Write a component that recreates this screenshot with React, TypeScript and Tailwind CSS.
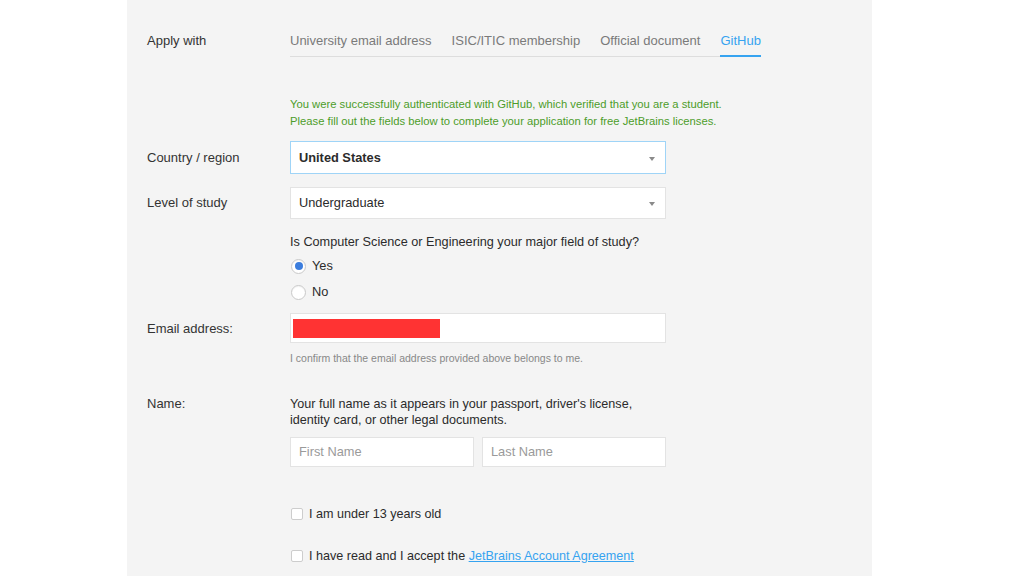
import React from 'react';

const tabs = ['University email address', 'ISIC/ITIC membership', 'Official document', 'GitHub'];

function SelectBox({ value, focused, bold }: { value: string; focused?: boolean; bold?: boolean }) {
  return (
    <div
      className={`flex items-center justify-between w-[376px] bg-white pl-[8px] pr-[10px] border ${
        focused ? 'h-[33px] border-[#9fd4f7]' : 'h-[32px] border-[#e3e3e3]'
      }`}
    >
      <span className={`text-[12.8px] text-[#2b2b2b] ${bold ? 'font-bold' : ''}`}>{value}</span>
      <svg width="6" height="4" viewBox="0 0 6 4" className="mt-[2px]">
        <path d="M0 0 L6 0 L3 4 Z" fill="#8a8a8a" />
      </svg>
    </div>
  );
}

function Radio({ label, checked }: { label: string; checked?: boolean }) {
  return (
    <div className="flex items-center h-[20px]">
      <span className="ml-px flex items-center justify-center w-[15px] h-[15px] rounded-full bg-white border border-[#c9c9c9] shadow-[inset_0_1px_1px_rgba(0,0,0,0.05)]">
        {checked && <span className="w-[8px] h-[8px] rounded-full bg-[#3b7ddd]" />}
      </span>
      <span className="ml-[6px] text-[12.8px] text-[#2b2b2b]">{label}</span>
    </div>
  );
}

function Checkbox({ children }: { children: React.ReactNode }) {
  return (
    <div className="flex items-center h-[18px]">
      <span className="ml-px w-[12px] h-[12px] rounded-[2px] bg-white border border-[#cdcdcd]" />
      <span className="ml-[6px] text-[12.6px] text-[#2b2b2b]">{children}</span>
    </div>
  );
}

export default function App() {
  return (
    <div className="flex w-full h-[576px] bg-white overflow-hidden font-['Liberation_Sans',Arial,sans-serif]">
      <div className="ml-[127px] w-[745px] h-full bg-[#f4f4f4] pl-[20px] pt-[33px]">
        {/* Apply with */}
        <div className="flex">
          <div className="w-[143px] text-[13px] leading-[16px] text-[#333]">Apply with</div>
          <div className="flex gap-[20px] border-b border-[#dddddd] w-fit">
            {tabs.map((t) => (
              <div
                key={t}
                className={`text-[13px] leading-[16px] pb-[6px] -mb-px border-b-2 ${
                  t === 'GitHub' ? 'text-[#36a3f0] border-[#36a3f0]' : 'text-[#7a7a7a] border-transparent'
                }`}
              >
                {t}
              </div>
            ))}
          </div>
        </div>

        {/* Success message */}
        <div className="ml-[143px] mt-[39px] text-[11.25px] leading-[17px] text-[#4c9d2a]">
          <p>You were successfully authenticated with GitHub, which verified that you are a student.</p>
          <p>Please fill out the fields below to complete your application for free JetBrains licenses.</p>
        </div>

        {/* Country */}
        <div className="flex items-center mt-[11px]">
          <div className="w-[143px] text-[13px] text-[#333]">Country / region</div>
          <SelectBox value="United States" focused bold />
        </div>

        {/* Level */}
        <div className="flex items-center mt-[13px]">
          <div className="w-[143px] text-[13px] text-[#333]">Level of study</div>
          <SelectBox value="Undergraduate" />
        </div>

        {/* Major */}
        <div className="ml-[143px]">
          <p className="mt-[15px] text-[12.7px] leading-[16px] text-[#2b2b2b]">
            Is Computer Science or Engineering your major field of study?
          </p>
          <div className="mt-[6px]">
            <Radio label="Yes" checked />
          </div>
          <div className="mt-[6px]">
            <Radio label="No" />
          </div>
        </div>

        {/* Email */}
        <div className="flex items-center mt-[11px]">
          <div className="w-[143px] text-[13px] text-[#333] pt-[2px]">Email address:</div>
          <div className="w-[376px] h-[30px] bg-white border border-[#e3e3e3] pl-[2px] pt-[5px]">
            <div className="w-[147px] h-[19px] bg-[#ff3333]" />
          </div>
        </div>
        <p className="ml-[143px] mt-[8px] text-[10.5px] leading-[14px] text-[#888]">
          I confirm that the email address provided above belongs to me.
        </p>

        {/* Name */}
        <div className="flex mt-[31px]">
          <div className="w-[143px] text-[13px] leading-[16px] text-[#333]">Name:</div>
          <div className="w-[376px]">
            <p className="text-[12.6px] leading-[16px] text-[#2b2b2b]">
              Your full name as it appears in your passport, driver's license,
              <br />
              identity card, or other legal documents.
            </p>
            <div className="flex gap-[8px] mt-[9px]">
              <div className="flex-1 h-[30px] bg-white border border-[#e3e3e3] pl-[8px] flex items-center text-[12.8px] text-[#9a9a9a]">
                First Name
              </div>
              <div className="flex-1 h-[30px] bg-white border border-[#e3e3e3] pl-[8px] flex items-center text-[12.8px] text-[#9a9a9a]">
                Last Name
              </div>
            </div>
          </div>
        </div>

        {/* Checkboxes */}
        <div className="ml-[143px] mt-[38px]">
          <Checkbox>I am under 13 years old</Checkbox>
        </div>
        <div className="ml-[143px] mt-[24px]">
          <Checkbox>
            I have read and I accept the{' '}
            <a className="text-[#36a3f0] underline">JetBrains Account Agreement</a>
          </Checkbox>
        </div>
      </div>
    </div>
  );
}
